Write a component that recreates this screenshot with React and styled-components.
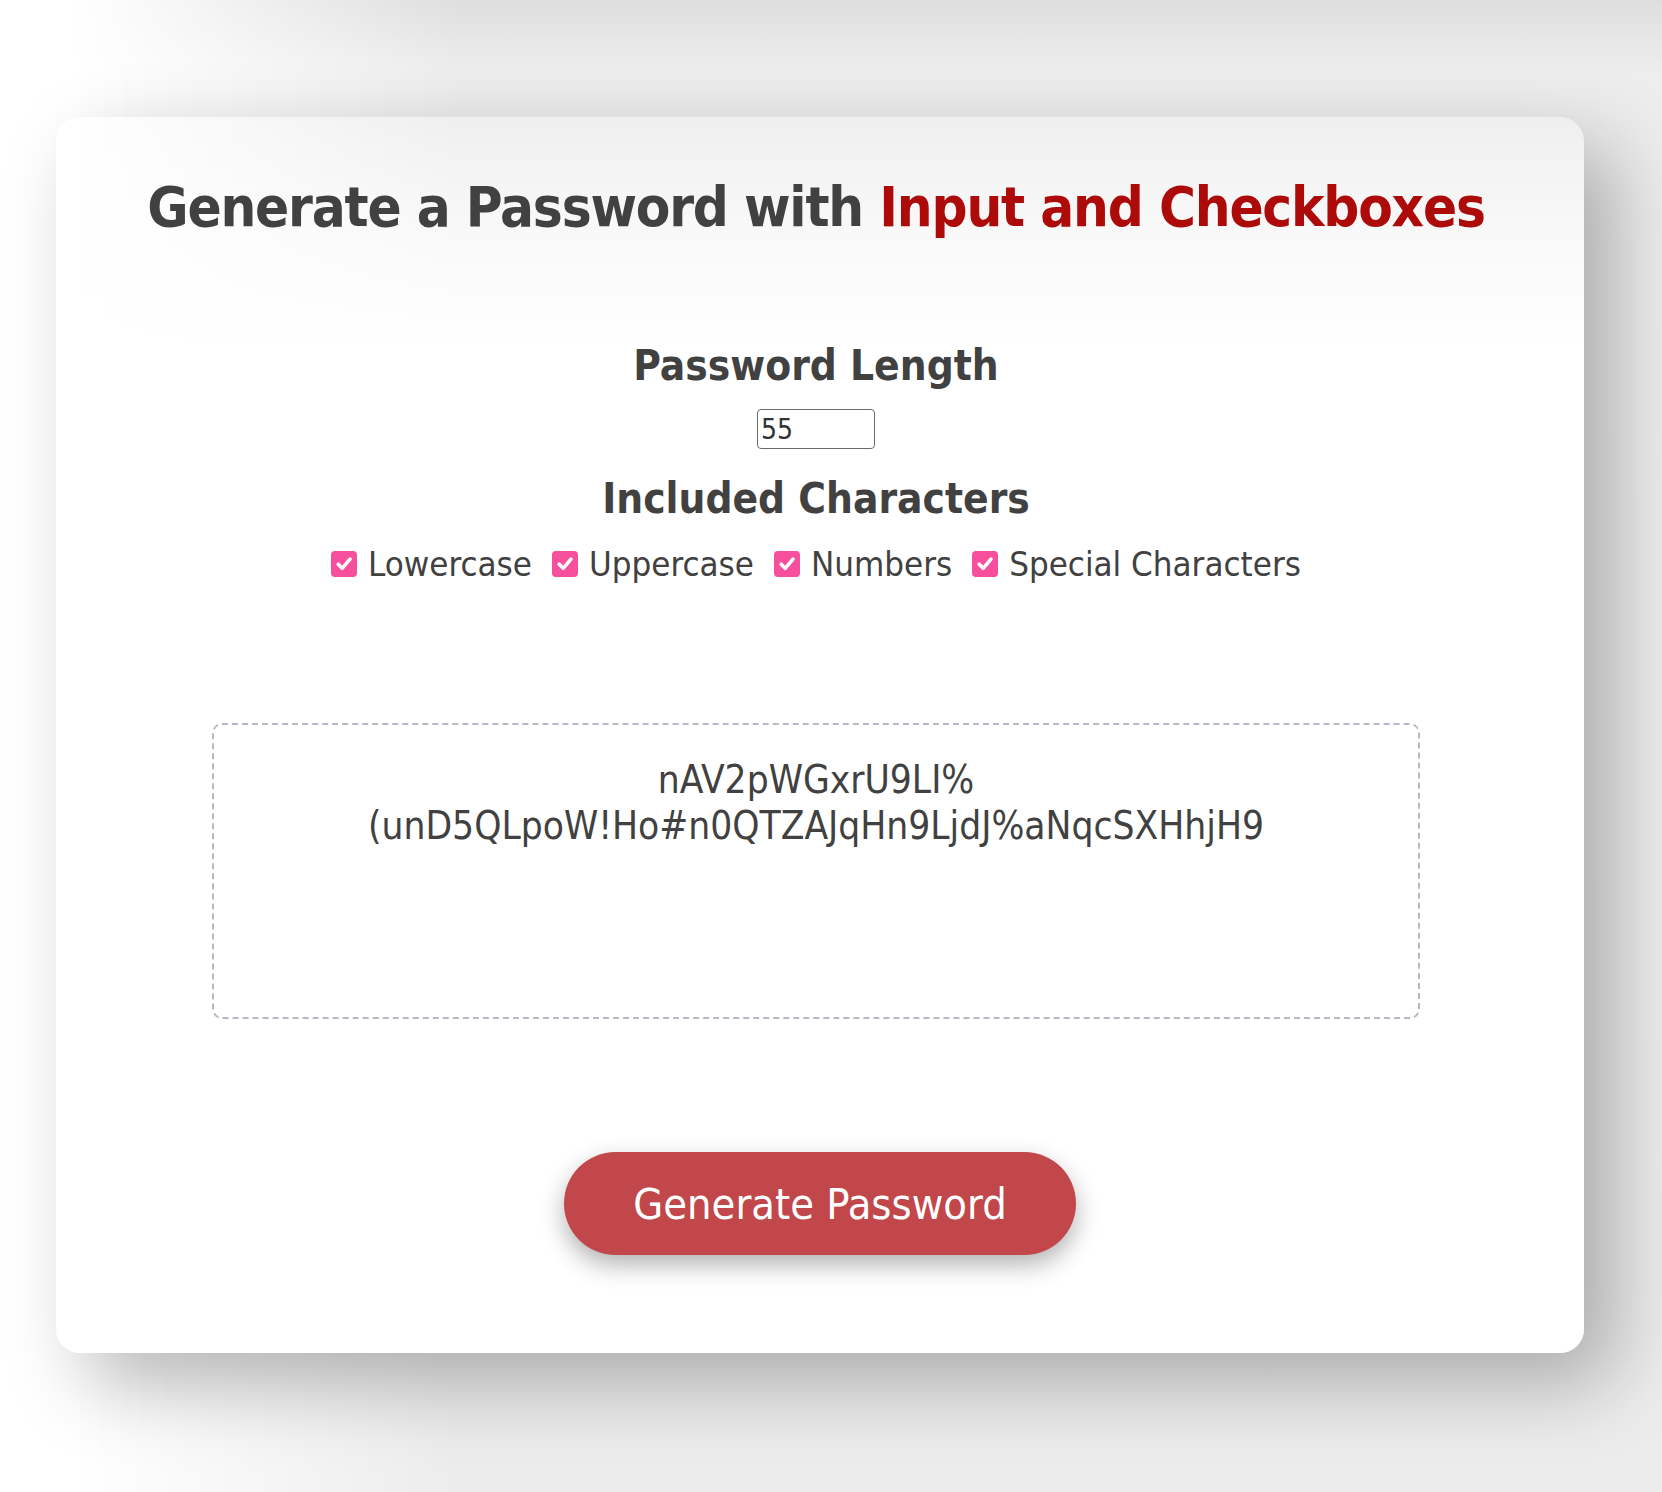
import React, { useState } from "react";
import styled, { createGlobalStyle } from "styled-components";

const CHARSETS = {
  lower: "abcdefghijklmnopqrstuvwxyz",
  upper: "ABCDEFGHIJKLMNOPQRSTUVWXYZ",
  numbers: "0123456789",
  special: "!@#$%^&*()",
};

const OPTIONS = [
  { key: "lower", label: "Lowercase" },
  { key: "upper", label: "Uppercase" },
  { key: "numbers", label: "Numbers" },
  { key: "special", label: "Special Characters" },
];

const INITIAL_PASSWORD =
  "nAV2pWGxrU9LI%(unD5QLpoW!Ho#n0QTZAJqHn9LjdJ%aNqcSXHhjH9";

const GlobalStyle = createGlobalStyle`
  html, body {
    margin: 0;
    padding: 0;
    background: #fff;
  }
  body {
    font-family: "DejaVu Sans Condensed", "DejaVu Sans", Verdana, sans-serif;
    color: #414141;
  }
  * {
    box-sizing: border-box;
  }
`;

const Stage = styled.div`
  position: relative;
  min-height: 1492px;
  overflow: hidden;
  padding: 117px 78px 139px 56px;
`;

// soft grey haze that sits behind the card
const Haze = styled.div`
  position: absolute;
  inset: 0;
  background: linear-gradient(180deg, #dedede 0, #ededed 70px, #ececec 100%);
  -webkit-mask-image: linear-gradient(90deg, transparent 70px, #000 460px);
  mask-image: linear-gradient(90deg, transparent 70px, #000 460px);
`;

const Card = styled.main`
  position: relative;
  display: flex;
  flex-direction: column;
  align-items: center;
  height: 1236px;
  padding: 56px 8px 0 0;
  border-radius: 24px;
  background: linear-gradient(
    180deg,
    rgba(255, 255, 255, 0.1) 0,
    rgba(255, 255, 255, 0.6) 100px,
    #fff 230px
  );
  box-shadow: 30px 30px 80px rgba(0, 0, 0, 0.28);
`;

const Title = styled.h1`
  margin: 0;
  font-size: 56px;
  line-height: 68px;
  font-weight: 700;
  letter-spacing: -1.2px;
  color: #414141;
  white-space: nowrap;
`;

const Accent = styled.span`
  color: #ad0a0a;
`;

const SectionTitle = styled.h2`
  margin: ${(p) => p.$top}px 0 0;
  font-size: 42px;
  line-height: 50px;
  font-weight: 700;
  color: #414141;
`;

const LengthInput = styled.input`
  margin-top: 18px;
  width: 118px;
  height: 40px;
  padding: 0 3px;
  border: 1.5px solid #6a6a6a;
  border-radius: 4px;
  font-family: inherit;
  font-size: 28px;
  color: #333;
  background: #fff;
  outline: none;
  -moz-appearance: textfield;
  &::-webkit-inner-spin-button,
  &::-webkit-outer-spin-button {
    -webkit-appearance: none;
    margin: 0;
  }
`;

const Options = styled.div`
  display: flex;
  align-items: center;
  gap: 20px;
  margin-top: 20px;
`;

const Option = styled.label`
  display: flex;
  align-items: center;
  gap: 11px;
  font-size: 34.6px;
  line-height: 40px;
  color: #414141;
  cursor: pointer;
  user-select: none;
`;

const HiddenCheck = styled.input`
  position: absolute;
  opacity: 0;
  width: 0;
  height: 0;
`;

const Box = styled.span`
  display: flex;
  align-items: center;
  justify-content: center;
  flex: 0 0 26px;
  width: 26px;
  height: 26px;
  border-radius: 4px;
  background: ${(p) => (p.$on ? "#f64f9d" : "#fff")};
  border: ${(p) => (p.$on ? "none" : "1.5px solid #767676")};
`;

const Output = styled.div`
  margin-top: 139px;
  width: 1208px;
  height: 296px;
  padding: 32px 40px;
  border: 2px dashed #b4b9c3;
  border-radius: 10px;
  text-align: center;
  font-size: 38.5px;
  line-height: 46px;
  color: #414141;
`;

const GenerateButton = styled.button`
  margin: 133px 0 0 8px;
  width: 512px;
  height: 103px;
  border: none;
  border-radius: 52px;
  background: #c2474a;
  color: #fff;
  font-family: inherit;
  font-size: 43px;
  cursor: pointer;
  box-shadow: 0 10px 24px rgba(0, 0, 0, 0.3);
`;

const Check = () => (
  <svg width="26" height="26" viewBox="0 0 26 26" fill="none">
    <path
      d="M7.2 13.2l4 4.1L19 8.2"
      stroke="#fff"
      strokeWidth="3.6"
      strokeLinecap="round"
      strokeLinejoin="round"
    />
  </svg>
);

const makePassword = (length, flags) => {
  const pool = OPTIONS.filter((o) => flags[o.key])
    .map((o) => CHARSETS[o.key])
    .join("");
  if (!pool) return "";
  let out = "";
  for (let i = 0; i < length; i++) {
    out += pool[Math.floor(Math.random() * pool.length)];
  }
  return out;
};

const App = () => {
  const [length, setLength] = useState(55);
  const [flags, setFlags] = useState({
    lower: true,
    upper: true,
    numbers: true,
    special: true,
  });
  const [password, setPassword] = useState(INITIAL_PASSWORD);

  const toggle = (key) => setFlags((f) => ({ ...f, [key]: !f[key] }));

  return (
    <Stage>
      <GlobalStyle />
      <Haze />
      <Card>
        <Title>
          Generate a Password with <Accent>Input and Checkboxes</Accent>
        </Title>

        <SectionTitle $top={100}>Password Length</SectionTitle>
        <LengthInput
          type="number"
          value={length}
          onChange={(e) => setLength(Number(e.target.value))}
        />

        <SectionTitle $top={25}>Included Characters</SectionTitle>
        <Options>
          {OPTIONS.map((o) => (
            <Option key={o.key}>
              <HiddenCheck
                type="checkbox"
                checked={flags[o.key]}
                onChange={() => toggle(o.key)}
              />
              <Box $on={flags[o.key]}>{flags[o.key] && <Check />}</Box>
              {o.label}
            </Option>
          ))}
        </Options>

        <Output>{password}</Output>

        <GenerateButton onClick={() => setPassword(makePassword(length, flags))}>
          Generate Password
        </GenerateButton>
      </Card>
    </Stage>
  );
};

export default App;
